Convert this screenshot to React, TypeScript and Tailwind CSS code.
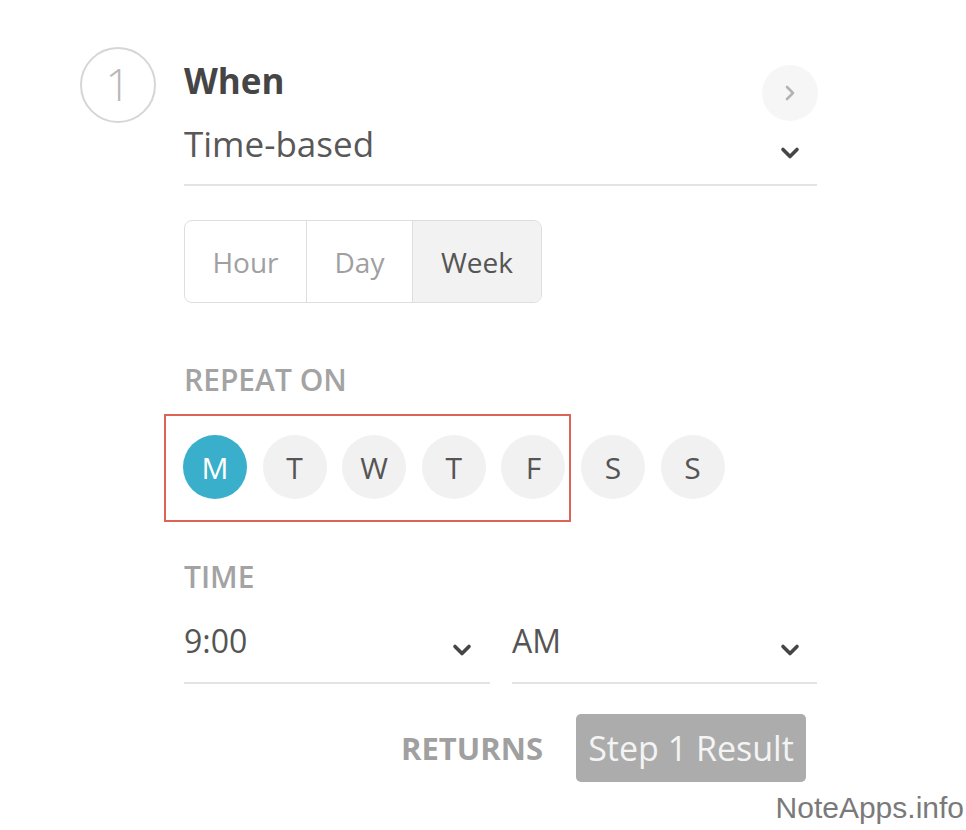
import React from "react";

function ChevronDown({ className = "" }: { className?: string }) {
  return (
    <svg width="22" height="20" viewBox="0 0 22 20" className={className}>
      <path d="M4 6.5 L11 13.5 L18 6.5" fill="none" stroke="#454545" strokeWidth="3.6" strokeLinecap="round" strokeLinejoin="round" />
    </svg>
  );
}

function ChevronRight() {
  return (
    <svg width="16" height="20" viewBox="0 0 16 20">
      <path d="M5 4 L11 10 L5 16" fill="none" stroke="#b3b3b3" strokeWidth="2.6" strokeLinecap="round" strokeLinejoin="round" />
    </svg>
  );
}

const days = [
  { l: "M", active: true },
  { l: "T" },
  { l: "W" },
  { l: "T" },
  { l: "F" },
  { l: "S" },
  { l: "S" },
];

export default function App() {
  return (
    <div className="relative w-[966px] h-[830px] bg-white overflow-hidden font-['Open_Sans',sans-serif]">
      <div className="flex pl-[80px]">
        {/* step number */}
        <div className="mt-[47px] w-[76px] h-[76px] shrink-0 rounded-full border-2 border-[#d6d6d6] flex items-center justify-center">
          <span className="text-[44px] leading-none font-light text-[#b8b8b8] -mt-[2px]">1</span>
        </div>

        {/* content */}
        <div className="ml-[28px] w-[633px] pt-[61px] flex flex-col">
          {/* header */}
          <div className="flex justify-between items-start h-[40px]">
            <span className="text-[35px] leading-[40px] font-bold text-[#454545]">When</span>
            <div className="mt-[4px] mr-[-1px] w-[56px] h-[56px] rounded-full bg-[#f6f6f6] flex items-center justify-center">
              <ChevronRight />
            </div>
          </div>

          {/* trigger select */}
          <div className="mt-[21px] flex justify-between items-start pb-[18px] border-b-2 border-[#e3e3e3]">
            <span className="text-[35px] leading-[44px] text-[#585858]">Time-based</span>
            <div className="mt-[21px] mr-[16px]">
              <ChevronDown />
            </div>
          </div>

          {/* segmented */}
          <div className="mt-[34px] flex">
            <div className="flex h-[83px] border border-[#dedede] rounded-[8px] overflow-hidden">
              <div className="w-[121px] flex items-center justify-center text-[28px] text-[#a0a0a0]">Hour</div>
              <div className="w-[106px] flex items-center justify-center text-[28px] text-[#a0a0a0] border-l border-[#dedede]">Day</div>
              <div className="w-[129px] flex items-center justify-center text-[28px] text-[#555] bg-[#f2f2f2] border-l border-[#dedede]">Week</div>
            </div>
          </div>

          {/* repeat on */}
          <div className="mt-[61px] text-[30px] leading-[32px] font-semibold text-[#a3a3a3]">REPEAT ON</div>

          <div className="relative mt-[39px] flex gap-[15.6px] -ml-[1px]">
            {days.map((d, i) => (
              <div
                key={i}
                className={
                  d.active
                    ? "w-[64px] h-[64px] rounded-full bg-[#3aafcb] flex items-center justify-center text-[30px] text-white"
                    : "w-[64px] h-[64px] rounded-full bg-[#f1f1f1] flex items-center justify-center text-[30px] text-[#555]"
                }
              >
                {d.l}
              </div>
            ))}
            <div className="absolute left-[-19px] top-[-21px] w-[407px] h-[108px] border-2 border-[#dc6457] pointer-events-none" />
          </div>

          {/* time */}
          <div className="mt-[62px] text-[30px] leading-[32px] font-semibold text-[#a3a3a3]">TIME</div>

          <div className="mt-[28px] flex gap-[22px]">
            <div className="w-[306px] flex justify-between items-start pb-[21px] border-b-2 border-[#e3e3e3]">
              <span className="text-[32px] leading-[40px] text-[#555]">9:00</span>
              <div className="mt-[19px] mr-[17px]">
                <ChevronDown />
              </div>
            </div>
            <div className="w-[305px] flex justify-between items-start pb-[21px] border-b-2 border-[#e3e3e3]">
              <span className="text-[32px] leading-[40px] text-[#555]">AM</span>
              <div className="mt-[19px] mr-[16px]">
                <ChevronDown />
              </div>
            </div>
          </div>

          {/* returns */}
          <div className="mt-[30px] flex justify-end items-center gap-[33px] mr-[11px]">
            <span className="text-[31px] font-bold text-[#a0a0a0]">RETURNS</span>
            <div className="w-[230px] h-[68px] rounded-[5px] bg-[#acacac] flex items-center justify-center text-[34px] text-[#f4f4f4]">
              Step 1 Result
            </div>
          </div>
        </div>
      </div>

      <div className="absolute right-[2px] top-[793px] text-[30px] leading-none font-['Liberation_Sans',Arial,sans-serif] text-[#7a7a7a]">
        NoteApps.info
      </div>
    </div>
  );
}
